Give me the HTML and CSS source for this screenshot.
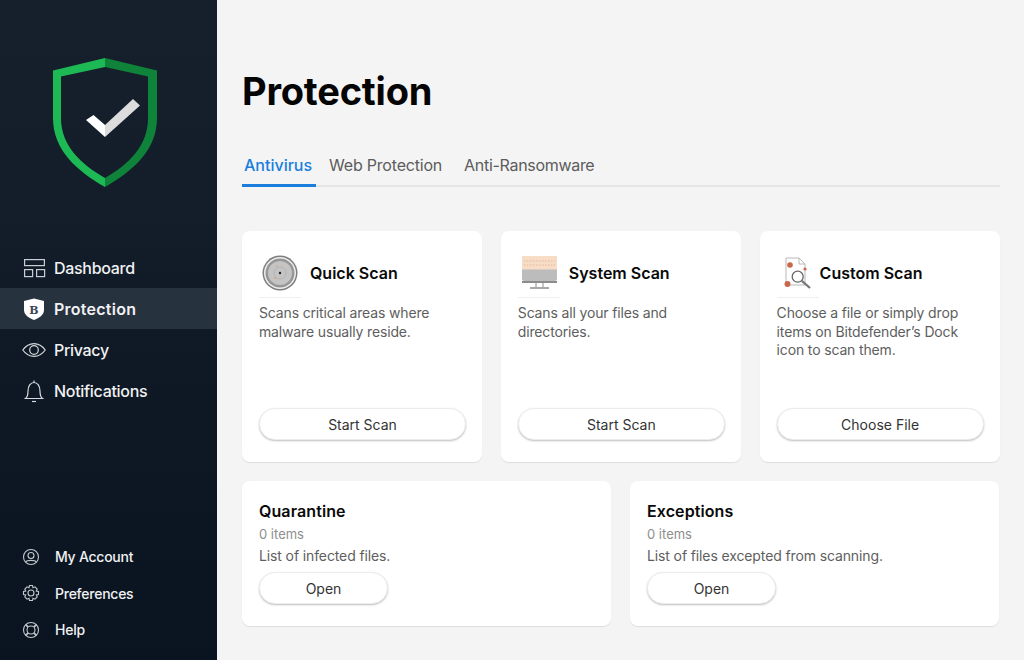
FILE: index.html
```html
<!DOCTYPE html>
<html lang="en">
<head>
<meta charset="utf-8">
<title>Protection</title>
<link rel="stylesheet" href="styles.css">
</head>
<body>
<div class="app">
  <aside class="sidebar">
    <div class="logo">
      <svg width="104" height="130" viewBox="0 0 104 130">
        <path fill="#1cb955" d="M52 0 0 12.500V60C0 92 24 113 52 129V120C28 106 8 88 8 60V18.500L52 9Z"/>
        <path fill="#0e8339" d="M52 0 104 12.500V60C104 92 80 113 52 129V120C76 106 95 88 95 60V18.500L52 9Z"/>
        <path fill="#fff" d="M33 62 40.500 57 52 67V79Z"/>
        <path fill="#dcdcdc" d="M52 67 80 41 87 47.500 52 79Z"/>
      </svg>
    </div>
    <nav class="nav">
      <a class="nav-item">
        <svg class="nav-icon" width="24" height="20" viewBox="0 0 24 20" fill="none" stroke="#c9ced4" stroke-width="1.200">
          <rect x="2.600" y="1.600" width="19.800" height="6"/><rect x="2.600" y="11.600" width="8" height="7"/><rect x="14.600" y="11.600" width="8" height="7"/>
        </svg>
        <span>Dashboard</span>
      </a>
      <a class="nav-item active">
        <svg class="nav-icon" width="24" height="24" viewBox="0 0 24 24">
          <path fill="#fff" d="M12 1.500 22 4V13C22 18 17 21 12 23 7 21 2 18 2 13V4Z"/>
          <text x="12" y="16.500" class="shield-b">B</text>
        </svg>
        <span>Protection</span>
      </a>
      <a class="nav-item">
        <svg class="nav-icon" width="24" height="18" viewBox="0 0 24 18" fill="none" stroke="#d5d8dc" stroke-width="1.200">
          <path d="M.8 9C4 4.500 8 2.600 12 2.600S20 4.500 23.200 9C20 13.500 16 15.400 12 15.400S4 13.500 .8 9Z"/><circle cx="12" cy="9" r="4.300"/>
        </svg>
        <span>Privacy</span>
      </a>
      <a class="nav-item">
        <svg class="nav-icon" width="24" height="24" viewBox="0 0 24 24" fill="none" stroke="#d5d8dc" stroke-width="1.200">
          <path d="M3.500 19.500C5.500 18 6 16 6 12 6 7 8.500 3.500 12 3.500S18 7 18 12C18 16 18.500 18 20.500 19.500Z"/><path d="M10 22.500H14"/><path d="M12 1.500V3.500"/>
        </svg>
        <span>Notifications</span>
      </a>
    </nav>
    <nav class="subnav">
      <a class="sub-item">
        <svg class="sub-icon" width="18" height="18" viewBox="0 0 18 18" fill="none" stroke="#c3c8ce" stroke-width="1.100">
          <circle cx="9" cy="9" r="7.500"/><circle cx="9" cy="7.500" r="3"/><path d="M3.800 14C5 11.800 13 11.800 14.200 14"/>
        </svg>
        <span>My Account</span>
      </a>
      <a class="sub-item">
        <svg class="sub-icon" width="18" height="18" viewBox="0 0 18 18" fill="none" stroke="#c3c8ce" stroke-width="1.100">
          <path d="M7.500 1.500H10.500L11 3.700 13 2.800 15.200 5 14.300 7 16.500 7.500V10.500L14.300 11 15.200 13 13 15.200 11 14.300 10.500 16.500H7.500L7 14.300 5 15.200 2.800 13 3.700 11 1.500 10.500V7.500L3.700 7 2.800 5 5 2.800 7 3.700Z"/><circle cx="9" cy="9" r="3"/>
        </svg>
        <span>Preferences</span>
      </a>
      <a class="sub-item">
        <svg class="sub-icon" width="18" height="18" viewBox="0 0 18 18" fill="none" stroke="#c3c8ce" stroke-width="1.100">
          <circle cx="9" cy="9" r="7.500"/><circle cx="9" cy="9" r="4"/><path d="M3.700 3.700 6.200 6.200M14.300 3.700 11.800 6.200M3.700 14.300 6.200 11.800M14.300 14.300 11.800 11.800" stroke-width="1.800"/>
        </svg>
        <span>Help</span>
      </a>
    </nav>
  </aside>
  <main class="main">
    <h1 class="title">Protection</h1>
    <div class="tabs">
      <a class="tab tab-active">Antivirus</a>
      <a class="tab tab-web">Web Protection</a>
      <a class="tab tab-ransom">Anti-Ransomware</a>
    </div>
    <section class="row-three">
      <article class="card scan-card">
        <header class="scan-head">
          <svg class="scan-icon" width="36" height="36" viewBox="0 0 36 36">
            <circle cx="18" cy="18" r="17.500" fill="#7e7e7e"/><circle cx="18" cy="18" r="16" fill="#eee"/><circle cx="18" cy="18" r="14.500" fill="#969696"/><circle cx="18" cy="18" r="12" fill="#c4c4c4"/>
            <circle cx="18" cy="18" r="6" fill="none" stroke="#b5b5b5"/><circle cx="18" cy="18" r="1.200" fill="#222"/><circle cx="13" cy="23" r="1" fill="#e0a070"/><circle cx="15" cy="11" r=".8" fill="#e0a070"/>
          </svg>
          <h2 class="scan-title">Quick Scan</h2>
        </header>
        <p class="desc">Scans critical areas where malware usually reside.</p>
        <button class="btn btn-wide">Start Scan</button>
      </article>
      <article class="card scan-card">
        <header class="scan-head">
          <svg class="scan-icon" width="36" height="36" viewBox="0 0 36 36">
            <rect x="1" y="1" width="35" height="25" rx="2" fill="#bcbcbc"/>
            <path d="M1 14.500V3A2 2 0 0 1 3 1H34A2 2 0 0 1 36 3V14.500Z" fill="#f7dcc6"/>
            <path d="M3 6H34M3 10H34" stroke="#e6b797" stroke-dasharray="1.500 1.500"/>
            <rect x="1" y="26" width="35" height="2" fill="#8c8c8c"/>
            <path d="M15 28V32M22 28V32" stroke="#8c8c8c"/><rect x="9" y="32" width="19" height="2" fill="#a8a8a8"/>
          </svg>
          <h2 class="scan-title">System Scan</h2>
        </header>
        <p class="desc">Scans all your files and directories.</p>
        <button class="btn btn-wide">Start Scan</button>
      </article>
      <article class="card scan-card">
        <header class="scan-head">
          <svg class="scan-icon scan-icon-file" width="36" height="36" viewBox="0 0 36 36" fill="none">
            <path d="M6 3H19L25 9V30H6Z" fill="#fff" stroke="#b9b9b9"/><path d="M19 3V9H25" stroke="#b9b9b9"/>
            <circle cx="17.700" cy="21.700" r="5.500" fill="#fff" stroke="#666" stroke-width="1.300"/>
            <path d="M21.800 25.800 30 33" stroke="#777" stroke-width="2.200"/>
            <circle cx="10" cy="10" r="2.800" fill="#c9674a"/><circle cx="25" cy="14" r="1.600" fill="#c9674a"/><circle cx="7.500" cy="29" r="3" fill="#c9674a"/>
          </svg>
          <h2 class="scan-title">Custom Scan</h2>
        </header>
        <p class="desc">Choose a file or simply drop items on Bitdefender’s Dock icon to scan them.</p>
        <button class="btn btn-wide">Choose File</button>
      </article>
    </section>
    <section class="row-two">
      <article class="card list-card">
        <h2 class="list-title">Quarantine</h2>
        <p class="count">0 items</p>
        <p class="desc list-desc">List of infected files.</p>
        <button class="btn btn-small">Open</button>
      </article>
      <article class="card list-card">
        <h2 class="list-title">Exceptions</h2>
        <p class="count">0 items</p>
        <p class="desc list-desc">List of files excepted from scanning.</p>
        <button class="btn btn-small">Open</button>
      </article>
    </section>
  </main>
</div>
</body>
</html>
```
FILE: styles.css
```css
* { box-sizing: border-box; }
html, body { margin: 0; height: 100%; overflow: hidden; }
body { font-family: Inter, "Liberation Sans", sans-serif; background: #f4f4f4; }
.app { display: flex; width: 1024px; height: 660px; }

.sidebar {
  width: 217px; flex: none; display: flex; flex-direction: column;
  background: linear-gradient(#161f2c 0%, #141e2b 30%, #0f1926 55%, #0a1420 100%);
  color: #f0f1f3;
}
.logo { padding: 58px 0 0 53px; height: 247px; }
.logo svg { display: block; }
.nav { display: flex; flex-direction: column; }
.nav-item { height: 41px; display: flex; align-items: center; position: relative; padding-left: 54px; font-size: 16px; font-weight: 500; letter-spacing: -.3px; }
.nav-item.active { background: #27323f; font-weight: 600; letter-spacing: .25px; }
.nav-icon { position: absolute; left: 22px; top: 50%; transform: translateY(-50%); }
.shield-b { font-family: "DejaVu Serif", serif; font-size: 11px; font-weight: 700; fill: #3c4450; text-anchor: middle; }
.subnav { margin-top: auto; padding-bottom: 12px; display: flex; flex-direction: column; }
.sub-item { height: 36.500px; display: flex; align-items: center; position: relative; padding-left: 55px; font-size: 14px; font-weight: 500; letter-spacing: -.25px; }
.sub-icon { position: absolute; left: 22px; top: 50%; transform: translateY(-50%); }

.main { flex: 1; padding: 69px 24px 0 25px; }
.title { margin: 0; font-size: 38px; line-height: 44px; font-weight: 700; color: #050505; letter-spacing: -.2px; }
.tabs { margin-top: 29px; display: flex; height: 45px; border-bottom: 2px solid #e6e6e6; width: 758px; }
.tab { display: block; font-size: 16px; line-height: 20px; padding-top: 13px; color: #5c5c5c; height: 45px; letter-spacing: -.2px; }
.tab-active { color: #1a7fdc; font-weight: 500; width: 74px; padding-left: 2px; border-bottom: 3px solid #1a7fdc; white-space: nowrap; letter-spacing: 0; }
.tab-web { margin-left: 13px; }
.tab-ransom { margin-left: 22px; letter-spacing: -.3px; }

.row-three { margin-top: 44px; display: grid; grid-template-columns: repeat(3, 240px); gap: 18.800px; }
.row-two { margin-top: 19px; display: grid; grid-template-columns: 369px 369px; gap: 19px; }
.card { background: #fff; border-radius: 8px; box-shadow: 0 1px 1px rgba(0,0,0,.09); }
.scan-card { height: 231px; padding: 0 17px; display: flex; flex-direction: column; }
.scan-head { height: 66px; padding-top: 18px; display: flex; align-items: center; position: relative; }
.scan-head::after { content: ""; position: absolute; left: 0; bottom: -1px; width: 42px; height: 1px; background: #efefef; }
.scan-icon { flex: none; margin: 0 12px 0 3px; }
.scan-icon-file { margin: 0 4px 0 3px; }
.scan-title { margin: 0; font-size: 16px; line-height: 20px; font-weight: 600; color: #0a0a0a; }
.desc { margin: 0; font-size: 14px; line-height: 18.500px; color: #5e5e5e; letter-spacing: -.15px; }
.scan-card .desc { margin-top: 7px; height: 104px; }
.btn { display: block; padding: 0; background: #fff; border: 1px solid #ececec; border-radius: 16px; box-shadow: 0 1px 2px rgba(0,0,0,.25); font-family: inherit; font-size: 14px; color: #333; height: 32px; }
.btn-wide { width: 207px; margin-left: 0; }
.btn-small { width: 129px; }
.list-card { height: 145px; padding: 20px 17px 0; }
.list-title { margin: 0; font-size: 16px; line-height: 20px; font-weight: 600; color: #0a0a0a; letter-spacing: .1px; }
.count { margin: 4px 0 0; font-size: 13px; line-height: 18px; color: #8e8e8e; }
.list-desc { margin-top: 4px; line-height: 18px; letter-spacing: -.12px; }
.btn-small { margin-top: 7px; }
```
